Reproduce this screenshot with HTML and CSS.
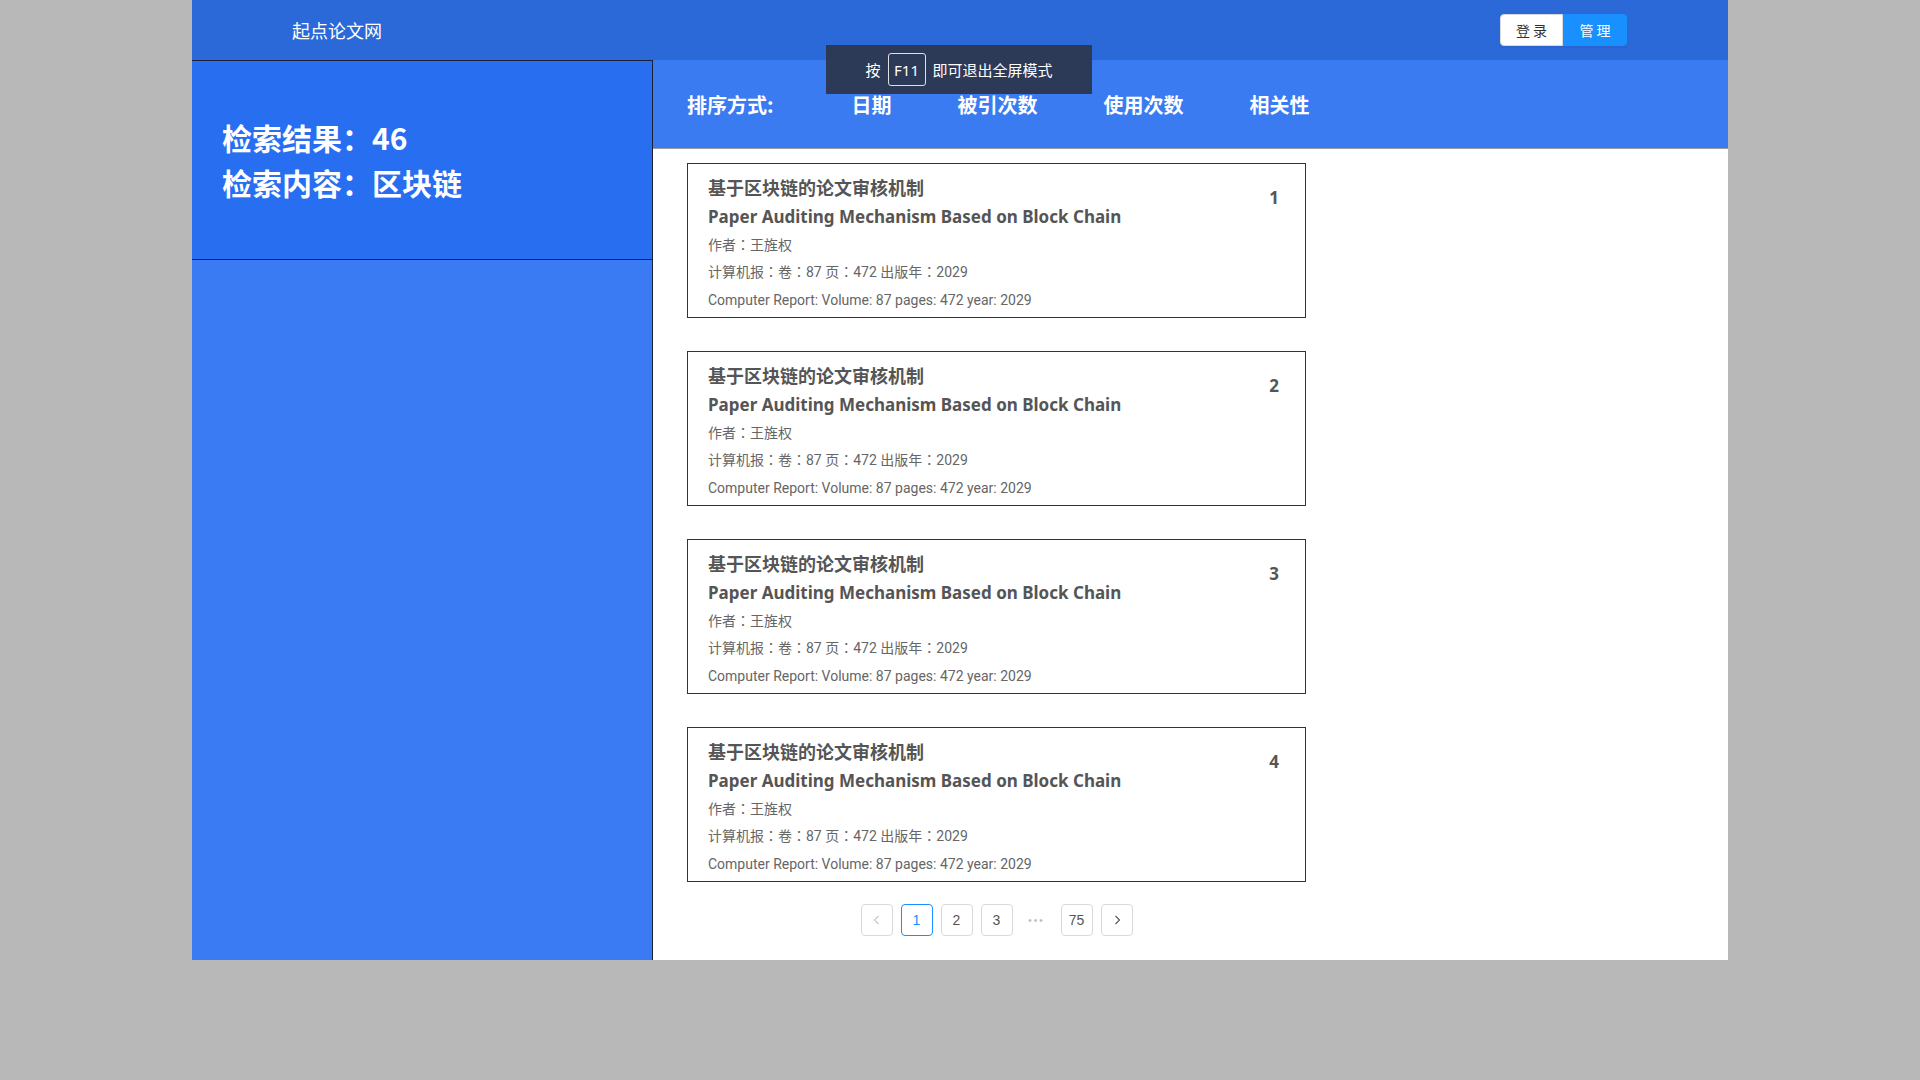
FILE: index.html
```html
<!DOCTYPE html>
<html lang="zh-CN">
<head>
<meta charset="utf-8">
<title>起点论文网</title>
<link rel="stylesheet" href="styles.css">
</head>
<body>
<div class="app">
  <header class="topbar">
    <div class="logo">起点论文网</div>
    <div class="btn-group">
      <button class="btn btn-default">登 录</button>
      <button class="btn btn-primary">管 理</button>
    </div>
  </header>
  <div class="main">
    <aside class="side">
      <div class="side-summary">
        <div class="summary-line">检索结果：46</div>
        <div class="summary-line">检索内容：区块链</div>
      </div>
    </aside>
    <section class="content">
      <div class="sortbar">
        <span class="sort-label">排序方式:</span>
        <span class="sort-item">日期</span>
        <span class="sort-item">被引次数</span>
        <span class="sort-item">使用次数</span>
        <span class="sort-item">相关性</span>
      </div>
      <div class="list">
        <div class="card">
          <div class="card-body">
            <div class="title-cn">基于区块链的论文审核机制</div>
            <div class="title-en">Paper Auditing Mechanism Based on Block Chain</div>
            <div class="meta author">作者：王旌权</div>
            <div class="meta">计算机报：卷：87 页：472 出版年：2029</div>
            <div class="meta">Computer Report: Volume: 87 pages: 472 year: 2029</div>
          </div>
          <div class="card-no">1</div>
        </div>
        <div class="card">
          <div class="card-body">
            <div class="title-cn">基于区块链的论文审核机制</div>
            <div class="title-en">Paper Auditing Mechanism Based on Block Chain</div>
            <div class="meta author">作者：王旌权</div>
            <div class="meta">计算机报：卷：87 页：472 出版年：2029</div>
            <div class="meta">Computer Report: Volume: 87 pages: 472 year: 2029</div>
          </div>
          <div class="card-no">2</div>
        </div>
        <div class="card">
          <div class="card-body">
            <div class="title-cn">基于区块链的论文审核机制</div>
            <div class="title-en">Paper Auditing Mechanism Based on Block Chain</div>
            <div class="meta author">作者：王旌权</div>
            <div class="meta">计算机报：卷：87 页：472 出版年：2029</div>
            <div class="meta">Computer Report: Volume: 87 pages: 472 year: 2029</div>
          </div>
          <div class="card-no">3</div>
        </div>
        <div class="card">
          <div class="card-body">
            <div class="title-cn">基于区块链的论文审核机制</div>
            <div class="title-en">Paper Auditing Mechanism Based on Block Chain</div>
            <div class="meta author">作者：王旌权</div>
            <div class="meta">计算机报：卷：87 页：472 出版年：2029</div>
            <div class="meta">Computer Report: Volume: 87 pages: 472 year: 2029</div>
          </div>
          <div class="card-no">4</div>
        </div>
        <ul class="pager">
          <li class="pg pg-disabled"><svg width="10" height="10" viewBox="0 0 10 10"><path d="M6.5 1 L2.5 5 L6.5 9" fill="none" stroke="currentColor" stroke-width="1.1"/></svg></li>
          <li class="pg pg-active">1</li>
          <li class="pg">2</li>
          <li class="pg">3</li>
          <li class="pg-dots">•••</li>
          <li class="pg">75</li>
          <li class="pg"><svg width="10" height="10" viewBox="0 0 10 10"><path d="M3.5 1 L7.5 5 L3.5 9" fill="none" stroke="currentColor" stroke-width="1.1"/></svg></li>
        </ul>
      </div>
    </section>
  </div>
  <div class="fs-toast">按 <span class="key">F11</span> 即可退出全屏模式</div>
</div>
</body>
</html>
```
FILE: styles.css
```css
html, body {
  margin: 0;
  padding: 0;
  background: #b8b8b8;
  font-family: "Noto Sans", "Noto Sans CJK SC", sans-serif;
}

.app {
  width: 1536px;
  height: 960px;
  margin: 0 auto;
  display: flex;
  flex-direction: column;
  background: #ffffff;
}

.topbar {
  height: 60px;
  flex: none;
  background: #2c69d8;
  display: flex;
  align-items: center;
  justify-content: space-between;
  padding: 0 101px 0 100px;
}

.logo {
  color: #ffffff;
  font-size: 18px;
  font-family: "Noto Sans CJK SC", sans-serif;
}

.btn-group {
  display: flex;
  box-shadow: 0 2px 0 rgba(0, 0, 0, 0.04);
}

.btn {
  height: 32px;
  width: 63px;
  font-size: 14px;
  font-family: "Noto Sans CJK SC", sans-serif;
  border: 1px solid #d9d9d9;
  padding: 0;
  cursor: pointer;
}

.btn-default {
  background: #ffffff;
  color: #333333;
  border-radius: 4px 0 0 4px;
}

.btn-primary {
  background: #1890ff;
  border-color: #1890ff;
  color: #ffffff;
  border-radius: 0 4px 4px 0;
  width: 64px;
}

.main {
  flex: 1;
  display: flex;
  min-height: 0;
}

.side {
  width: 460px;
  flex: none;
  background: #3a7af2;
  border-top: 1px solid #1b2236;
  border-right: 1px solid #1b2236;
}

.side-summary {
  box-sizing: border-box;
  height: 199px;
  background: #276ef1;
  border-bottom: 1px solid #1b2236;
  padding: 54px 0 0 30px;
}

.summary-line {
  color: #ffffff;
  font-family: "Noto Sans CJK SC", sans-serif;
  font-weight: 700;
  font-size: 30px;
  line-height: 45px;
}

.content {
  flex: 1;
  display: flex;
  flex-direction: column;
}

.sortbar {
  height: 88px;
  flex: none;
  background: #3a7bf2;
  border-bottom: 1px solid #9a9a9a;
  display: flex;
  align-items: center;
  padding-left: 34px;
  color: #ffffff;
  font-family: "Noto Sans CJK SC", sans-serif;
  font-weight: 700;
  font-size: 20px;
}

.sort-label {
  margin-right: 78px;
}

.sort-item {
  margin-right: 66px;
}

.list {
  padding: 14px 0 0 34px;
  width: 619px;
}

.card {
  box-sizing: border-box;
  width: 619px;
  height: 155px;
  border: 1px solid #333333;
  margin-bottom: 33px;
  display: flex;
  justify-content: space-between;
  padding: 8px 26px 0 20px;
}

.card:nth-child(4) {
  margin-bottom: 22px;
}

.title-cn {
  font-family: "Noto Sans CJK SC", sans-serif;
  font-weight: 700;
  font-size: 18px;
  line-height: 30px;
  color: #555555;
}

.title-en {
  font-weight: 700;
  font-size: 17px;
  line-height: 30px;
  color: #555555;
}

.meta {
  font-family: Roboto, "Noto Sans CJK TC", sans-serif;
  font-feature-settings: "locl" 0;
  font-size: 14px;
  line-height: 28px;
  color: #666666;
}

.meta.author {
  line-height: 26px;
}

.card-no {
  font-weight: 700;
  font-size: 17px;
  line-height: 20px;
  margin-top: 16px;
  color: #555555;
}

.pager {
  list-style: none;
  margin: 0;
  padding: 0;
  display: flex;
  justify-content: center;
  gap: 8px;
  font-family: "Liberation Sans", Arial, sans-serif;
  font-size: 14px;
}

.pg {
  box-sizing: border-box;
  width: 32px;
  height: 32px;
  border: 1px solid #d9d9d9;
  border-radius: 4px;
  display: flex;
  align-items: center;
  justify-content: center;
  color: #555555;
  background: #ffffff;
}

.pg-active {
  border-color: #1890ff;
  color: #1890ff;
}

.pg-disabled {
  color: #c8c8c8;
}

.pg-dots {
  width: 32px;
  height: 32px;
  display: flex;
  align-items: center;
  justify-content: center;
  color: #bfbfbf;
  font-size: 10px;
  letter-spacing: 2px;
}

.fs-toast {
  position: absolute;
  left: 826px;
  top: 45px;
  width: 266px;
  height: 49px;
  background: #2c3a57;
  color: #ffffff;
  font-family: "Noto Sans CJK SC", sans-serif;
  font-size: 15px;
  display: flex;
  align-items: center;
  justify-content: center;
  gap: 7px;
}

.fs-toast .key {
  display: inline-flex;
  align-items: center;
  justify-content: center;
  width: 38px;
  height: 33px;
  box-sizing: border-box;
  border: 1px solid #e0e0e0;
  border-radius: 3px;
  font-family: "Noto Sans", sans-serif;
}
```
